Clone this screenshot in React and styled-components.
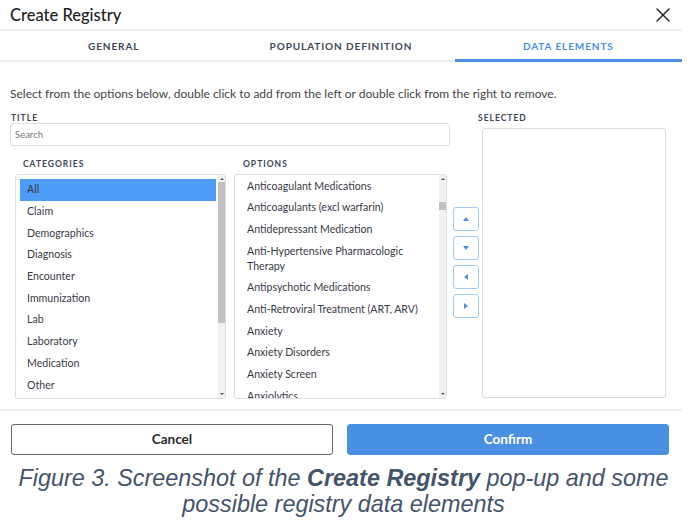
import React, { useLayoutEffect, useRef } from "react";
import styled, { createGlobalStyle } from "styled-components";
import { X } from "lucide-react";

const GlobalStyle = createGlobalStyle`
  * { box-sizing: border-box; }
  body {
    margin: 0;
    background: #fff;
    font-family: Lato, "Noto Sans", sans-serif;
    color: #333;
  }
`;

const Page = styled.div`
  width: 687px;
`;

const Dialog = styled.div`
  width: 682px;
  background: #fff;
`;

const Header = styled.div`
  display: flex;
  align-items: center;
  justify-content: space-between;
  height: 31px;
  padding: 0 7px 0 10px;
  border-bottom: 2px solid #eeeeee;
`;

const Title = styled.h1`
  margin: 0;
  font-size: 16.5px;
  font-weight: 500;
  color: #222;
`;

const CloseButton = styled.button`
  display: flex;
  padding: 0;
  border: 0;
  background: none;
  color: #222;
  cursor: pointer;
`;

const Tabs = styled.div`
  display: grid;
  grid-template-columns: repeat(3, 1fr);
  height: 31px;
  border-bottom: 2px solid #eeeeee;
`;

const Tab = styled.div`
  display: flex;
  align-items: center;
  justify-content: center;
  margin-bottom: -2px;
  padding-top: 2px;
  font-size: 10px;
  font-weight: 700;
  letter-spacing: 0.9px;
  text-transform: uppercase;
  color: ${(p) => (p.$active ? "#4a90e2" : "#3d4757")};
  border-bottom: 3px solid ${(p) => (p.$active ? "#4a90e2" : "transparent")};
`;

const Body = styled.div`
  padding: 24px 0 0 10px;
`;

const Intro = styled.p`
  margin: 0 0 12px;
  font-size: 12px;
  color: #444;
`;

const Columns = styled.div`
  display: flex;
  align-items: stretch;
`;

const LeftCol = styled.div`
  width: 440px;
`;

const Label = styled.div`
  padding-left: ${(p) => p.$indent || 0}px;
  font-size: 8.5px;
  font-weight: 700;
  letter-spacing: 1px;
  text-transform: uppercase;
  color: #3d4757;
`;

const Search = styled.input`
  display: block;
  width: 100%;
  height: 22.5px;
  padding: 0 4px;
  border: 1px solid #dddddd;
  border-radius: 3px;
  font-family: inherit;
  font-size: 9.5px;
  outline: none;
  &::placeholder { color: #777; }
`;

const ListsRow = styled.div`
  display: flex;
  gap: 8px;
  margin-top: 13px;
  padding-left: 5px;
`;

const ListCol = styled.div`
  width: ${(p) => p.$w}px;
`;

const ListFrame = styled.div`
  position: relative;
  height: 225px;
  margin-top: 5px;
  border: 1px solid #dddddd;
  border-radius: 3px;
  overflow: hidden;
`;

const Scroller = styled.div`
  height: 100%;
  padding: ${(p) => p.$padT}px ${(p) => p.$padR}px 3.5px ${(p) => p.$padL}px;
  overflow-y: scroll;
  scrollbar-width: none;
  &::-webkit-scrollbar { display: none; }
`;

const Track = styled.div`
  position: absolute;
  top: 0;
  right: 0;
  bottom: 0;
  width: 7px;
  background: #f1f1f1;
`;

const TrackArrow = styled.span`
  position: absolute;
  left: 1.5px;
  ${(p) => (p.$down ? "bottom: 3px;" : "top: 3px;")}
  width: 0;
  height: 0;
  border-left: 2px solid transparent;
  border-right: 2px solid transparent;
  ${(p) =>
    p.$down ? "border-top: 2px solid #555;" : "border-bottom: 2px solid #555;"}
`;

const Thumb = styled.div`
  position: absolute;
  left: 0;
  right: 0;
  top: ${(p) => p.$top}px;
  height: ${(p) => p.$size}px;
  background: #c1c1c1;
`;

const Item = styled.div`
  padding: 3.35px ${(p) => p.$padX}px;
  font-size: 10.6px;
  line-height: 15px;
  color: #3a3a46;
  background: ${(p) => (p.$selected ? "#4d9cf5" : "transparent")};
  cursor: default;
  user-select: none;
`;

const ArrowCol = styled.div`
  display: flex;
  flex-direction: column;
  justify-content: center;
  gap: 5px;
  width: 25px;
  margin-left: 3px;
  padding-top: 13px;
`;

const ArrowButton = styled.button`
  display: flex;
  align-items: center;
  justify-content: center;
  width: 25.5px;
  height: 24px;
  padding: 0;
  border: 1px solid #a3cbf8;
  border-radius: 3px;
  background: #fff;
  color: #4a90e2;
  cursor: pointer;
`;

const SelectedCol = styled.div`
  display: flex;
  flex-direction: column;
  width: 188px;
`;

const SelectedBox = styled.div`
  height: 270px;
  margin: 5px 0 0 4px;
  border: 1px solid #dddddd;
  border-radius: 3px;
`;

const Footer = styled.div`
  display: flex;
  gap: 14px;
  margin-top: 10px;
  padding: 13px 13px 0 11px;
  border-top: 2px solid #eeeeee;
`;

const Button = styled.button`
  flex: 1;
  height: 31px;
  border-radius: 3px;
  font-family: inherit;
  font-size: 13.5px;
  font-weight: 700;
  cursor: pointer;
  border: 1px solid ${(p) => (p.$primary ? "#4a90e2" : "#666")};
  background: ${(p) => (p.$primary ? "#4a90e2" : "#fff")};
  color: ${(p) => (p.$primary ? "#fff" : "#2a2a2a")};
`;

const Caption = styled.p`
  margin: 10px 0 0;
  font-family: "Liberation Sans", Arial, sans-serif;
  font-style: italic;
  font-size: 23.4px;
  line-height: 26px;
  text-align: center;
  color: #44546a;
`;

const categories = [
  "All",
  "Claim",
  "Demographics",
  "Diagnosis",
  "Encounter",
  "Immunization",
  "Lab",
  "Laboratory",
  "Medication",
  "Other",
  "Pharmacy",
  "Problem",
  "Procedure",
  "Provider",
  "Vital Signs",
];

const optionsBefore = [
  "ACE Inhibitors",
  "ADHD Medications",
  "Advance Care Planning",
  "Alcohol Screening",
  "Allergies",
  "Anemia",
  "Angiotensin Receptor Blockers",
  "Antibiotics",
  "Anticholinergic Medications",
];

const optionsShown = [
  "Anticoagulant Medications",
  "Anticoagulants (excl warfarin)",
  "Antidepressant Medication",
  "Anti-Hypertensive Pharmacologic Therapy",
  "Antipsychotic Medications",
  "Anti-Retroviral Treatment (ART, ARV)",
  "Anxiety",
  "Anxiety Disorders",
  "Anxiety Screen",
  "Anxiolytics",
];

const optionsAfter = [
  "Aspirin Therapy", "Asthma", "Asthma Controller Medications", "Atrial Fibrillation",
  "Autism Spectrum Disorder", "Beta Blockers", "Bipolar Disorder", "Blood Pressure", "BMI",
  "Breast Cancer Screening", "Cancer", "Cardiac Rehabilitation", "Cervical Cancer Screening",
  "Chlamydia Screening", "Cholesterol", "Chronic Kidney Disease", "COPD",
  "Colorectal Cancer Screening", "Congestive Heart Failure", "Coronary Artery Disease",
  "Dementia", "Depression", "Depression Screening", "Diabetes", "Diabetic Eye Exam",
  "Diabetic Foot Exam", "Dialysis", "Diuretics", "Emergency Department Visits",
  "End Stage Renal Disease", "Fall Risk Screening", "Flu Vaccine", "Hemoglobin A1c",
  "Hepatitis C", "HIV", "Hospice", "Hyperlipidemia", "Hypertension", "Inpatient Admissions",
  "Insulin", "LDL Cholesterol", "Mammogram", "Medication Reconciliation", "Metformin",
  "Microalbumin", "Nephropathy Screening", "Obesity", "Opioids", "Osteoporosis",
  "Pain Assessment", "Pneumococcal Vaccine", "Pregnancy", "Readmissions", "Retinopathy",
  "Schizophrenia", "Smoking Cessation", "Statins", "Stroke", "Substance Use Disorder",
  "Tobacco Use", "Urine Protein Screening", "Weight Assessment",
];

const arrows = {
  up: "1,6 4,2 7,6",
  down: "1,2 4,6 7,2",
  left: "6,1 2,4 6,7",
  right: "2,1 6,4 2,7",
};

function Triangle({ dir }) {
  return (
    <svg width="8" height="8" viewBox="0 0 8 8">
      <polygon points={arrows[dir]} fill="currentColor" />
    </svg>
  );
}

function ScrollList({ scrollerRef, padT, padL, padR, thumbTop, thumbSize, children }) {
  return (
    <ListFrame>
      <Scroller ref={scrollerRef} $padT={padT} $padL={padL} $padR={padR}>
        {children}
      </Scroller>
      <Track>
        <TrackArrow />
        <Thumb $top={thumbTop} $size={thumbSize} />
        <TrackArrow $down />
      </Track>
    </ListFrame>
  );
}

export default function App() {
  const optionsRef = useRef(null);
  const firstShownRef = useRef(null);

  useLayoutEffect(() => {
    if (optionsRef.current && firstShownRef.current) {
      optionsRef.current.scrollTop = firstShownRef.current.offsetTop - 1.5;
    }
  }, []);

  return (
    <Page>
      <GlobalStyle />
      <Dialog>
        <Header>
          <Title>Create Registry</Title>
          <CloseButton aria-label="Close">
            <X size={24} strokeWidth={1.4} />
          </CloseButton>
        </Header>
        <Tabs>
          <Tab>General</Tab>
          <Tab>Population Definition</Tab>
          <Tab $active>Data Elements</Tab>
        </Tabs>
        <Body>
          <Intro>
            Select from the options below, double click to add from the left or
            double click from the right to remove.
          </Intro>
          <Columns>
            <LeftCol>
              <Label $indent={1}>Title</Label>
              <Search placeholder="Search" />
              <ListsRow>
                <ListCol $w={211}>
                  <Label $indent={8}>Categories</Label>
                  <ScrollList padT={4.5} padL={4} padR={9} thumbTop={7} thumbSize={141}>
                    {categories.map((c, i) => (
                      <Item key={c} $padX={7} $selected={i === 0}>
                        {c}
                      </Item>
                    ))}
                  </ScrollList>
                </ListCol>
                <ListCol $w={213}>
                  <Label $indent={9}>Options</Label>
                  <ScrollList
                    scrollerRef={optionsRef}
                    padT={3.5}
                    padL={12}
                    padR={18}
                    thumbTop={27}
                    thumbSize={8}
                  >
                    {optionsBefore.map((o) => (
                      <Item key={o} $padX={0}>{o}</Item>
                    ))}
                    {optionsShown.map((o, i) => (
                      <Item key={o} $padX={0} ref={i === 0 ? firstShownRef : null}>
                        {o}
                      </Item>
                    ))}
                    {optionsAfter.map((o) => (
                      <Item key={o} $padX={0}>{o}</Item>
                    ))}
                  </ScrollList>
                </ListCol>
              </ListsRow>
            </LeftCol>
            <ArrowCol>
              <ArrowButton aria-label="Move up"><Triangle dir="up" /></ArrowButton>
              <ArrowButton aria-label="Move down"><Triangle dir="down" /></ArrowButton>
              <ArrowButton aria-label="Remove"><Triangle dir="left" /></ArrowButton>
              <ArrowButton aria-label="Add"><Triangle dir="right" /></ArrowButton>
            </ArrowCol>
            <SelectedCol>
              <Label>Selected</Label>
              <SelectedBox />
            </SelectedCol>
          </Columns>
        </Body>
        <Footer>
          <Button>Cancel</Button>
          <Button $primary>Confirm</Button>
        </Footer>
      </Dialog>
      <Caption>
        Figure 3. Screenshot of the <b>Create Registry</b> pop-up and some
        <br />
        possible registry data elements
      </Caption>
    </Page>
  );
}
